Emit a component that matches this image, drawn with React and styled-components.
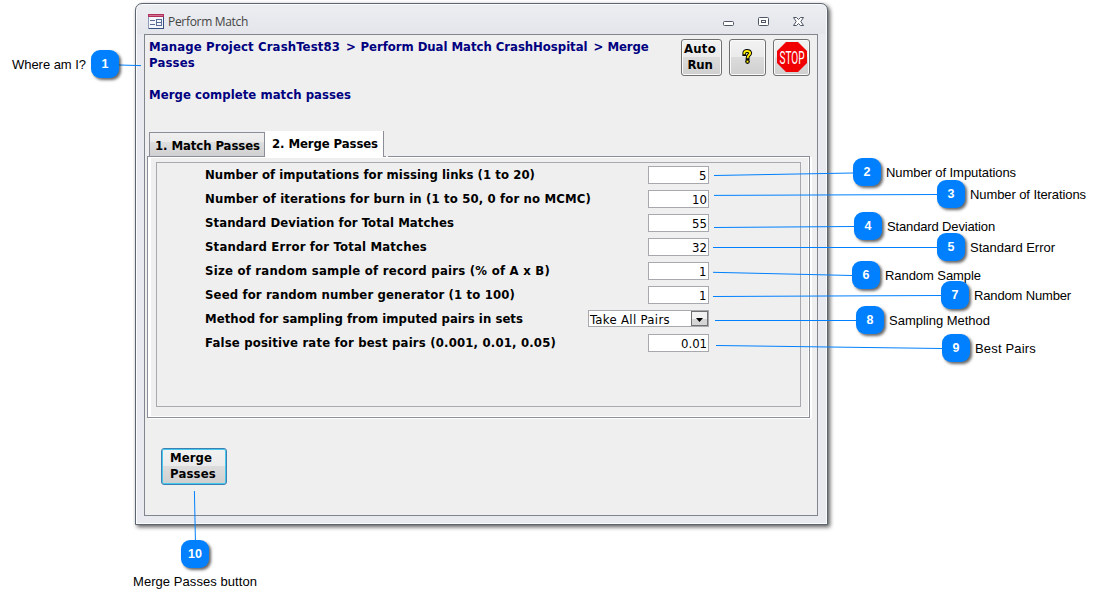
import React, { useLayoutEffect, useRef, useState } from 'react';
import styled, { createGlobalStyle } from 'styled-components';

const GlobalStyle = createGlobalStyle`
  * { box-sizing: border-box; }
  body { margin: 0; background: #fff; overflow: hidden; }
`;

const tahoma = `'DejaVu Sans Condensed', 'DejaVu Sans', sans-serif`;

const Page = styled.main`
  position: relative;
  width: 1102px;
  height: 605px;
  padding: 3px 0 0 135px;
  background: #fff;
  font-family: ${tahoma};
  color: #000;
`;

const Window = styled.section`
  display: flex;
  flex-direction: column;
  width: 693px;
  height: 522px;
  padding: 0 9px 8px 8px;
  border: 1px solid #5c6570;
  border-radius: 7px 7px 0 0;
  background: #e9eaef;
  box-shadow: inset 0 0 0 1px #fbfcfe, 2px 2px 4px rgba(0, 0, 0, 0.65);
`;

const TitleBar = styled.header`
  display: flex;
  flex: 0 0 29px;
  align-items: flex-start;
  margin: 1px -7px 0;
  padding: 9px 20px 0 11px;
  border-radius: 6px 6px 0 0;
  background: linear-gradient(#eceef2, #e3e5ea);
`;

const Title = styled.div`
  flex: 1;
  margin-left: 4px;
  font: 12px/16px 'Open Sans', sans-serif;
  color: #444;
`;

const WindowControls = styled.div`
  display: flex;
  margin-top: 2px;
`;

const Client = styled.div`
  flex: 1;
  min-height: 0;
  border: 1px solid #80858e;
  background: #efefef;
`;

const Heading = styled.div`
  display: flex;
  justify-content: space-between;
  height: 96px;
  padding: 4px 7px 0 4px;
`;

const Crumbs = styled.div`
  color: #000080;
  font-size: 13px;
  font-weight: bold;
  line-height: 16px;
`;

const Trail = styled.div`
  display: flex;
  gap: 6px;
`;

const Subtitle = styled.div`
  margin-top: 16px;
`;

const Toolbar = styled.div`
  display: flex;
  gap: 7px;
`;

const ToolButton = styled.button`
  display: flex;
  flex-direction: column;
  align-items: center;
  justify-content: center;
  width: ${(p) => p.$w}px;
  height: 37px;
  padding: ${(p) => (p.$text ? '0 3px 2px 0' : '0 0 2px')};
  border: 1px solid #707070;
  border-radius: 3px;
  background: linear-gradient(#f2f2f2 0, #ebebeb 48%, #dcdcdc 50%, #cfcfcf 100%);
  box-shadow: inset 0 0 0 1px #fafafa;
  font: bold 13px/16px ${tahoma};
  color: #000;
`;

const Tabs = styled.nav`
  display: flex;
  align-items: flex-end;
  height: 26px;
  margin: 0 0 -1px 4px;
  position: relative;

  &::after {
    content: '';
    width: 2px;
    height: 1px;
    margin-left: 2px;
    background: #efefef;
  }
`;

const Tab = styled.div`
  height: ${(p) => (p.$active ? 26 : 24)}px;
  margin-bottom: ${(p) => (p.$active ? 0 : 1)}px;
  width: ${(p) => p.$w}px;
  padding: ${(p) => (p.$active ? '5px 0 0 7px' : '5px 0 0 5px')};
  border: solid #8b8e98;
  border-width: ${(p) => (p.$active ? '0 1px 0 0' : '1px 1px 0 1px')};
  background: ${(p) => (p.$active ? '#fff' : 'linear-gradient(#f0f0f0 0, #ebebeb 38%, #dedede 40%, #d0d0d0 100%)')};
  font-size: 13px;
  font-weight: bold;
  line-height: 16px;
  white-space: nowrap;
`;

const TabPage = styled.div`
  width: 663px;
  height: 262px;
  margin-left: 2px;
  padding: 5px 7px 0 8px;
  border: 1px solid #8b8e98;
  background: #efefef;
  box-shadow: inset 3px 1px 0 #fff, inset -1px -1px 0 #fff, 2px 1px 0 #fff;
`;

const FieldGroup = styled.div`
  width: 645px;
  height: 245px;
  padding: 0 91px 0 48px;
  border: 1px solid #a8a9ae;
`;

const FieldRow = styled.label`
  display: flex;
  justify-content: space-between;
  height: 24px;
  padding-top: 3px;
  font-size: 13px;
`;

const FieldName = styled.span`
  font-weight: bold;
  line-height: 17px;
`;

const ValueBox = styled.span`
  display: block;
  width: 61px;
  height: 18px;
  padding-right: 1px;
  border: 1px solid #a8a9ae;
  background: #fff;
  font-size: 13px;
  line-height: 18px;
  text-align: right;
`;

const Combo = styled.span`
  display: flex;
  justify-content: space-between;
  width: 121px;
  height: 17px;
  padding-left: 1px;
  border: 1px solid #a8a9ae;
  background: #fff;
  line-height: 17px;
`;

const ComboArrow = styled.span`
  display: flex;
  align-items: center;
  justify-content: center;
  width: 17px;
  height: 15px;
  padding-top: 3px;
  border: 1px solid #707070;
  background: linear-gradient(#f2f2f2 50%, #d5d5d5 50%);
`;

const MergeButton = styled.button`
  display: block;
  width: 66px;
  height: 37px;
  margin: 30px 0 0 16px;
  padding: 1px 0 3px 8px;
  border: 1px solid #3c7fb1;
  border-radius: 3px;
  background: linear-gradient(#f2f2f2 0, #ebebeb 48%, #dcdcdc 50%, #cfcfcf 100%);
  box-shadow: inset 0 0 0 1px #46c8ee;
  font: bold 13px/16px ${tahoma};
  color: #000;
  text-align: left;
`;

const Connectors = styled.svg`
  position: absolute;
  inset: 0;
  pointer-events: none;
`;

const Badge = styled.div`
  position: absolute;
  left: ${(p) => p.$x}px;
  top: ${(p) => p.$y}px;
  width: 28px;
  height: 28px;
  border-radius: 9px;
  background: #0080ff;
  box-shadow: 2px 2px 3px rgba(0, 0, 0, 0.6);
  color: #fff;
  font: bold 12.5px/29px 'Liberation Sans', sans-serif;
  text-align: center;
`;

const Note = styled.div`
  position: absolute;
  left: ${(p) => p.$x}px;
  top: ${(p) => p.$y}px;
  font: 13px/16px 'Liberation Sans', sans-serif;
  color: #000;
  white-space: nowrap;
`;

const Spaced = styled.span`
  display: inline-block;
  white-space: nowrap;
`;

/* Text tracked so that it fills the given width. */
function FitText({ width, children }) {
  const ref = useRef(null);
  const [spacing, setSpacing] = useState(0);
  useLayoutEffect(() => {
    const natural = ref.current.getBoundingClientRect().width;
    setSpacing((width - natural) / children.length);
  }, []);
  return (
    <Spaced ref={ref} style={{ letterSpacing: `${spacing}px` }}>
      {children}
    </Spaced>
  );
}

const fields = [
  ['Number of imputations for missing links (1 to 20)', 330, '5', 8],
  ['Number of iterations for burn in (1 to 50, 0 for no MCMC)', 386, '10', 15],
  ['Standard Deviation for Total Matches', 249, '55', 15],
  ['Standard Error for Total Matches', 222, '32', 15],
  ['Size of random sample of record pairs (% of A x B)', 345, '1', 8],
  ['Seed for random number generator (1 to 100)', 310, '1', 8],
  ['Method for sampling from imputed pairs in sets', 318, null, 0],
  ['False positive rate for best pairs (0.001, 0.01, 0.05)', 351, '0.01', 26],
];

const callouts = [
  { n: 1, x: 91, y: 50, text: 'Where am I?', tx: 12, ty: 57, w: 74, line: [119, 65, 141, 65.6] },
  { n: 2, x: 853, y: 158, text: 'Number of Imputations', tx: 886, ty: 165, w: 130, line: [714, 175.5, 853, 173] },
  { n: 3, x: 937, y: 180, text: 'Number of Iterations', tx: 970, ty: 187, w: 116, line: [714, 195.4, 937, 194.5] },
  { n: 4, x: 854, y: 212, text: 'Standard Deviation', tx: 887, ty: 219, w: 108, line: [714, 227.5, 854, 226.5] },
  { n: 5, x: 937, y: 233, text: 'Standard Error', tx: 970, ty: 240, w: 85, line: [713, 247.5, 937, 247.5] },
  { n: 6, x: 852, y: 261, text: 'Random Sample', tx: 885, ty: 268, w: 96, line: [713, 272.3, 852, 275.5] },
  { n: 7, x: 941, y: 281, text: 'Random Number', tx: 974, ty: 288, w: 97, line: [713, 296.5, 941, 295.5] },
  { n: 8, x: 856, y: 306, text: 'Sampling Method', tx: 889, ty: 313, w: 101, line: [715, 320.5, 856, 320.5] },
  { n: 9, x: 942, y: 334, text: 'Best Pairs', tx: 975, ty: 341, w: 61, line: [716, 345.5, 942, 348.5] },
  { n: 10, x: 181, y: 540, text: 'Merge Passes button', tx: 133, ty: 574, w: 124, line: [194.4, 491, 195.4, 540] },
];

function FormIcon() {
  return (
    <svg width="16" height="15" viewBox="0 0 16 15" shapeRendering="crispEdges">
      <rect width="16" height="15" fill="#8c9cb8" />
      <rect width="16" height="3" fill="#b0305c" />
      <rect x="1" y="1" width="14" height="1" fill="#d4708f" />
      <rect x="1" y="3" width="14" height="11" fill="#f4f6fb" />
      <path d="M2 6.5h5M2 10.5h5M9 5.5h4M9 8.5h4M9 11.5h4M8.5 5v7M13.5 5v7" stroke="#5a6c96" fill="none" />
      <path d="M1 14.5h15M15.5 3v12" stroke="#344f80" fill="none" />
    </svg>
  );
}

function ControlIcons() {
  return (
    <svg width="82" height="12" viewBox="0 0 82 12" fill="#fff" stroke="#4e5666">
      <rect x="0.5" y="5.5" width="10" height="4" rx="1" />
      <rect x="35.5" y="1.5" width="10" height="8" rx="1" />
      <rect x="38.5" y="4.5" width="4" height="2" />
      <path d="M70.5 1.5h3l2 2 2-2h3L77.8 5.5l2.7 4h-3l-2-2-2 2h-3l2.7-4z" />
    </svg>
  );
}

function HelpIcon() {
  const mark = 'M2.3 5.2V4Q2.3 2 5 2T8.2 4Q8.2 5.3 6.6 6.4Q5.6 7.2 5.6 9.2';
  return (
    <svg width="11" height="16" viewBox="0 0 11 16" fill="none">
      <path d={mark} stroke="#000" strokeWidth="3.8" strokeLinecap="square" />
      <circle cx="5.5" cy="12.6" r="2.3" fill="#000" />
      <path d={mark} stroke="#ffee00" strokeWidth="1.9" />
      <rect x="4.5" y="11.6" width="2" height="2" fill="#ffee00" />
    </svg>
  );
}

function StopIcon() {
  return (
    <svg width="30" height="30" viewBox="0 0 30 30" overflow="visible">
      <path d="M9 0h12l9 9v12l-9 9H9l-9-9V9z" fill="#f00000" />
      <text x="2.5" y="21.5" textLength="25" lengthAdjust="spacingAndGlyphs" fill="#fff" fontFamily="Roboto, sans-serif" fontWeight="400" fontSize="18">STOP</text>
    </svg>
  );
}

export default function App() {
  return (
    <Page>
      <GlobalStyle />
      <Window>
        <TitleBar>
          <FormIcon />
          <Title><FitText width={80}>Perform Match</FitText></Title>
          <WindowControls><ControlIcons /></WindowControls>
        </TitleBar>
        <Client>
          <Heading>
            <Crumbs>
              <Trail>
                <FitText width={191}>Manage Project CrashTest83</FitText>
                <FitText width={8.5}>&gt;</FitText>
                <FitText width={227}>Perform Dual Match CrashHospital</FitText>
                <FitText width={8}>&gt;</FitText>
                <FitText width={41}>Merge</FitText>
              </Trail>
              <div><FitText width={46}>Passes</FitText></div>
              <Subtitle><FitText width={202}>Merge complete match passes</FitText></Subtitle>
            </Crumbs>
            <Toolbar>
              <ToolButton $w={41} $text>
                <FitText width={32}>Auto</FitText>
                <FitText width={25}>Run</FitText>
              </ToolButton>
              <ToolButton $w={37}><HelpIcon /></ToolButton>
              <ToolButton $w={37}><StopIcon /></ToolButton>
            </Toolbar>
          </Heading>
          <Tabs>
            <Tab $w={116}><FitText width={105}>1. Match Passes</FitText></Tab>
            <Tab $active $w={119}><FitText width={106}>2. Merge Passes</FitText></Tab>
          </Tabs>
          <TabPage>
            <FieldGroup>
              {fields.map(([name, w, value, vw]) => (
                <FieldRow key={name}>
                  <FieldName><FitText width={w}>{name}</FitText></FieldName>
                  {value ? (
                    <ValueBox><FitText width={vw}>{value}</FitText></ValueBox>
                  ) : (
                    <Combo>
                      <FitText width={80}>Take All Pairs</FitText>
                      <ComboArrow>
                        <svg width="7" height="4" viewBox="0 0 7 4"><path d="M0 0h7L3.5 4z" /></svg>
                      </ComboArrow>
                    </Combo>
                  )}
                </FieldRow>
              ))}
            </FieldGroup>
          </TabPage>
          <MergeButton>
            <div><FitText width={42}>Merge</FitText></div>
            <div><FitText width={46}>Passes</FitText></div>
          </MergeButton>
        </Client>
      </Window>
      <Connectors width="1102" height="605">
        {callouts.map(({ n, line: [x1, y1, x2, y2] }) => (
          <line key={n} x1={x1} y1={y1} x2={x2} y2={y2} stroke="#0080ff" strokeWidth="1" />
        ))}
      </Connectors>
      {callouts.map((c) => (
        <React.Fragment key={c.n}>
          <Note $x={c.tx} $y={c.ty}><FitText width={c.w}>{c.text}</FitText></Note>
          <Badge $x={c.x} $y={c.y}>{c.n}</Badge>
        </React.Fragment>
      ))}
    </Page>
  );
}
